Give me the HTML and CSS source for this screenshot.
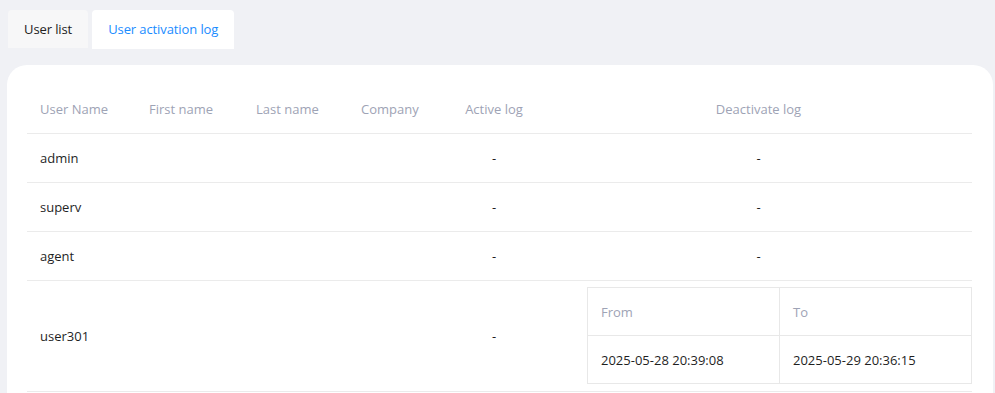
FILE: index.html
```html
<!DOCTYPE html>
<html lang="en">
<head>
    <meta charset="UTF-8">
    <title>User activation log</title>
    <link rel="stylesheet" href="styles.css">
</head>
<body>
    <div class="tabs">
        <div class="tab">User list</div>
        <div class="tab active">User activation log</div>
    </div>

    <div class="card">
        <table class="log">
            <colgroup>
                <col class="c-user">
                <col class="c-first">
                <col class="c-last">
                <col class="c-company">
                <col class="c-active">
                <col>
            </colgroup>
            <thead>
                <tr>
                    <th>User Name</th>
                    <th>First name</th>
                    <th>Last name</th>
                    <th>Company</th>
                    <th class="center">Active log</th>
                    <th class="center">Deactivate log</th>
                </tr>
            </thead>
            <tbody>
                <tr>
                    <td>admin</td><td></td><td></td><td></td>
                    <td class="center">-</td><td class="center">-</td>
                </tr>
                <tr>
                    <td>superv</td><td></td><td></td><td></td>
                    <td class="center">-</td><td class="center">-</td>
                </tr>
                <tr>
                    <td>agent</td><td></td><td></td><td></td>
                    <td class="center">-</td><td class="center">-</td>
                </tr>
                <tr>
                    <td>user301</td><td></td><td></td><td></td>
                    <td class="center">-</td>
                    <td class="nested-cell">
                        <table class="periods">
                            <tr>
                                <th>From</th>
                                <th>To</th>
                            </tr>
                            <tr>
                                <td>2025-05-28 20:39:08</td>
                                <td>2025-05-29 20:36:15</td>
                            </tr>
                        </table>
                    </td>
                </tr>
            </tbody>
        </table>
    </div>
</body>
</html>
```

FILE: styles.css
```css
body {
    margin: 0;
    padding: 10px 2px 0 7px;
    font-family: "Open Sans", sans-serif;
    font-size: 13px;
    color: #1f1f1f;
    background-color: #f0f1f5;
}
.tabs {
    display: flex;
    align-items: flex-start;
    gap: 4px;
    padding-left: 1px;
}
.tab {
    height: 38px;
    line-height: 38px;
    padding: 0 16px;
    border-radius: 4px 4px 0 0;
    background-color: #f7f7f8;
    font-size: 13px;
    letter-spacing: -0.1px;
    color: #222;
}
.tab.active {
    height: 39px;
    background-color: #fff;
    color: #1a8cff;
}
.card {
    margin-top: 16px;
    background-color: #fff;
    border-radius: 20px;
    padding: 20px 21px 20px 20px;
}
.log {
    width: 100%;
    border-collapse: collapse;
    table-layout: fixed;
}
.c-user { width: 109px; }
.c-first { width: 107px; }
.c-last { width: 105px; }
.c-company { width: 95px; }
.c-active { width: 102px; }
.log th, .log td {
    text-align: left;
    padding: 0 13px;
    height: 48px;
    border-bottom: 1px solid #ebebeb;
    font-weight: normal;
}
.log thead th {
    color: #9ea3b5;
}
.log .center {
    text-align: center;
}
.log td.nested-cell {
    padding: 6px 0 7px;
}
.periods {
    width: 385px;
    margin-left: auto;
    border-collapse: collapse;
    border: 1px solid #e8e8e8;
    table-layout: fixed;
}
.periods th, .periods td {
    text-align: left;
    font-weight: normal;
    height: 47px;
    padding: 0 13px;
    border: 1px solid #e8e8e8;
}
.periods th {
    color: #9ea3b5;
}
```
